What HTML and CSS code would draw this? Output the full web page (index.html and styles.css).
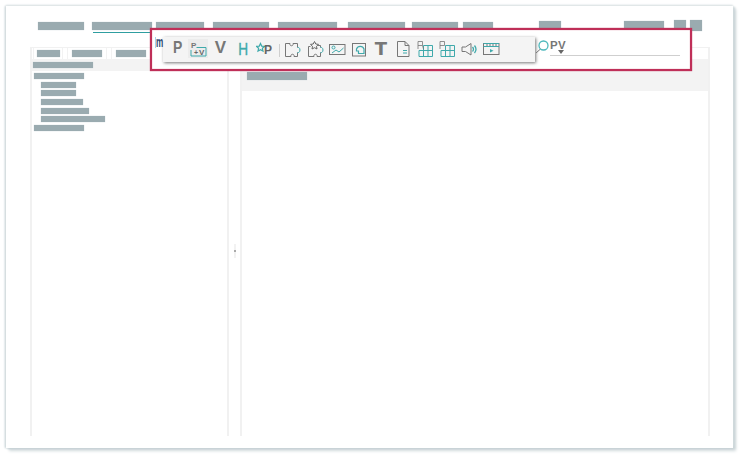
FILE: index.html
```html
<!DOCTYPE html>
<html lang="en">
<head>
<meta charset="utf-8">
<title>Toolbar</title>
<link rel="stylesheet" href="styles.css">
</head>
<body>
<div class="window">
  <nav class="nav">
    <span class="bar n1"></span><span class="bar n2 active"></span><span class="bar n3"></span><span class="bar n4"></span><span class="bar n5"></span><span class="bar n6"></span><span class="bar n7"></span><span class="bar n8"></span><span class="bar n9"></span><span class="bar n10"></span><span class="bar n11"></span><span class="bar n12"></span>
  </nav>
  <main class="main">
    <section class="panel left">
      <div class="tabs">
        <div class="tab t1"><span class="bar"></span></div>
        <div class="tab t2"><span class="bar"></span></div>
        <div class="tab t3"><span class="bar"></span></div>
      </div>
      <div class="tree-head"><span class="bar"></span></div>
      <ul class="tree">
        <li class="root r50"><span class="bar"></span></li>
        <li class="c35"><span class="bar"></span></li>
        <li class="c35"><span class="bar"></span></li>
        <li class="c42"><span class="bar"></span></li>
        <li class="c48"><span class="bar"></span></li>
        <li class="c64"><span class="bar"></span></li>
        <li class="root r50"><span class="bar"></span></li>
      </ul>
    </section>
    <div class="gutter"><span class="handle"></span></div>
    <section class="panel right">
      <div class="right-tabs"></div>
      <div class="right-head"><span class="bar"></span></div>
    </section>
  </main>

  <div class="callout">
    <span class="frag"><span class="frag-m">m</span></span>
    <div class="toolbar">
      <span class="slot letter p">P</span>
      <span class="slot on">
        <svg width="18" height="18" viewBox="0 0 18 18"><path d="M7.500 7.500H17V16H2V10" fill="none" stroke="#3fa9ab"/><text x="2" y="8" class="t-sm">P</text><text x="5" y="15" class="t-plus">+</text><text x="10" y="15" class="t-v">V</text></svg>
      </span>
      <span class="slot letter v">V</span>
      <span class="slot letter h">H</span>
      <span class="slot">
        <svg width="17" height="18" viewBox="0 0 17 18"><path d="M4.500 3.500l1.200 2.600 2.800.3-2.100 1.900.6 2.800-2.500-1.400-2.500 1.400.6-2.800L.5 6.400l2.800-.3z" fill="none" stroke="#3fa9ab" stroke-width="1.200"/><text x="8" y="14" class="t-md">P</text></svg>
      </span>
      <span class="slot"><span class="sep"></span></span>
      <span class="slot">
        <svg width="16" height="18" viewBox="0 0 16 18"><path d="M.5 3.500H5C4 6.500 9 6.500 8 3.500H12.500V7.500M12.500 12.500V16.500H9C10 13.500 5 13.500 6 16.500H.5V3.500" fill="none" stroke="#777"/><path d="M12.500 7.500C15.800 6.500 15.800 13.500 12.500 12.500" fill="none" stroke="#3fa9ab"/></svg>
      </span>
      <span class="slot">
        <svg width="16" height="18" viewBox="0 0 16 18"><path d="M2.500 6.500H.5V16.500H6C5 13.500 10 13.500 9 16.500H12.500V12.500M12.500 7.500V5.500H10" fill="none" stroke="#777"/><path d="M12.500 7.500C15.800 6.500 15.800 13.500 12.500 12.500" fill="none" stroke="#3fa9ab"/><path d="M6.500 1.500l1.300 2.500 2.700.4-2 1.900.5 2.700-2.500-1.300-2.500 1.300.5-2.700-2-1.900 2.700-.4z" fill="none" stroke="#666"/></svg>
      </span>
      <span class="slot">
        <svg width="17" height="18" viewBox="0 0 17 18"><rect x=".5" y="4.500" width="15.500" height="10" fill="none" stroke="#777"/><circle cx="4.500" cy="7.500" r="1.500" fill="none" stroke="#3fa9ab"/><path d="M3 13L7 10L10 12L14.500 8" fill="none" stroke="#3fa9ab"/></svg>
      </span>
      <span class="slot">
        <svg width="15" height="18" viewBox="0 0 15 18"><rect x=".5" y="3.500" width="13" height="12.500" fill="none" stroke="#777"/><path d="M4.500 11V9A4 4 0 0 1 12 9V13.500H6.500V11z" fill="none" stroke="#3fa9ab" stroke-width="1.200"/></svg>
      </span>
      <span class="slot letter t">T</span>
      <span class="slot">
        <svg width="13" height="18" viewBox="0 0 13 18"><path d="M.5 1.500H8L12 5.500V16.500H.5zM8 1.500V5.500H12" fill="none" stroke="#777"/><path d="M6 10.500H10M6 13H10" fill="none" stroke="#3fa9ab"/></svg>
      </span>
      <span class="slot">
        <svg width="16" height="18" viewBox="0 0 16 18"><path d="M6.500 5.500H15.500V16.500H2V10.500H15.500M6.500 5.500V16.500M11 5.500V16.500" fill="none" stroke="#3fa9ab"/><path d="M1 9V1.500H5.500V5.500M1 5.500H5.500L6.500 9" fill="none" stroke="#777" stroke-width=".8"/></svg>
      </span>
      <span class="slot">
        <svg width="16" height="18" viewBox="0 0 16 18"><path d="M6.500 5.500H15.500V16.500H2V10.500H15.500M6.500 5.500V16.500M11 5.500V16.500" fill="none" stroke="#3fa9ab"/><path d="M1 9V1.500H5.500V5.500H1" fill="none" stroke="#777" stroke-width=".8"/></svg>
      </span>
      <span class="slot">
        <svg width="17" height="18" viewBox="0 0 17 18"><path d="M1 7H4.500L10 3.500V15L4.500 11.500H1z" fill="none" stroke="#777"/><path d="M11.500 7C12.800 8.500 12.800 10 11.500 11.500M13.500 5.500C15.500 8 15.500 10.500 13.500 13" fill="none" stroke="#3fa9ab" stroke-width="1.300"/></svg>
      </span>
      <span class="slot">
        <svg width="17" height="18" viewBox="0 0 17 18"><rect x=".5" y="3.500" width="15.500" height="11" fill="none" stroke="#777"/><path d="M.5 6.500H16M.5 3.500H16" stroke="#3fa9ab" fill="none"/><path d="M4 4V6M7 4V6M10 4V6M13 4V6" stroke="#777" fill="none"/><path d="M7 9L10.500 10.700L7 12.500z" fill="#3fa9ab"/></svg>
      </span>
    </div>
    <div class="search">
      <svg class="lens" width="15" height="14" viewBox="0 0 15 14"><circle cx="8.500" cy="5.500" r="4.500" fill="none" stroke="#4cb8bc" stroke-width="1.300"/><path d="M5.500 9L1 13" stroke="#777" fill="none"/></svg>
      <div class="field">
        <span class="pv">PV</span>
        <span class="caret"></span>
      </div>
    </div>
  </div>
</div>
</body>
</html>
```
FILE: styles.css
```css
* { box-sizing: border-box; }
html, body { margin: 0; padding: 0; background: #fff; }
body { width: 742px; height: 458px; overflow: hidden; font-family: "Liberation Sans", Arial, sans-serif; }

.window {
  position: relative;
  width: 727px;
  height: 442px;
  margin: 6px 0 0 6px;
  background: #fff;
  box-shadow: 0 -1px 2px #dfe5e6, -1px 0 2px #bccacd, 2px 1px 2px #c9d4d7, 3px 3px 3px #d3dcde;
  padding-top: 14px;
}

.bar { display: block; height: 7px; background: #9aabb0; box-shadow: 0 0 1px #c4cfd2; }

.nav { display: flex; align-items: center; height: 11px; padding-left: 32px; }
.nav .bar { height: 8px; flex: none; }
.n1 { width: 46px; }
.n2 { width: 60px; margin-left: 8px; position: relative; }
.n2::after { content: ""; position: absolute; left: 1px; right: -1px; top: 10px; height: 1px; background: #2f9ea0; }
.n3 { width: 48px; margin-left: 4px; }
.n4 { width: 56px; margin-left: 9px; }
.n5 { width: 59px; margin-left: 9px; }
.n6 { width: 57px; margin-left: 11px; }
.n7 { width: 46px; margin-left: 7px; }
.n8 { width: 30px; margin-left: 5px; }
.nav .n9 { width: 22px; margin-left: 46px; height: 9px; }
.nav .n10 { width: 40px; margin-left: 63px; height: 10px; }
.nav .n11 { width: 12px; margin-left: 10px; height: 11px; }
.nav .n12 { width: 12px; margin-left: 4px; height: 11px; }

.main { display: flex; height: 389px; margin: 16px 0 0 24px; }
.panel { flex: none; border: solid #f1f1f1; border-width: 1px 2px 0 2px; }
.left { width: 199px; }
.right { width: 470px; }

.gutter { flex: none; width: 11px; display: flex; justify-content: center; padding-top: 197px; }
.handle { display: block; width: 2px; height: 14px; background: linear-gradient(#f2f2f2 40%, #aaa 40%, #aaa 60%, #f2f2f2 60%); }

.tabs { display: flex; height: 11px; padding-left: 1px; }
.tab { height: 11px; border: solid #f2f2f2; border-width: 0 1px; display: flex; justify-content: center; padding-top: 2px; }
.t1 { width: 30px; }
.t2 { width: 40px; margin-left: 4px; }
.t3 { width: 40px; margin-left: 4px; }
.t1 .bar { width: 23px; }
.t2 .bar, .t3 .bar { width: 30px; }

.tree-head { height: 12px; background: #f3f3f3; padding: 3px 0 0 1px; }
.tree-head .bar { width: 60px; height: 6px; }

.tree { list-style: none; margin: 2px 0 0; padding: 0; }
.tree li { height: 8.7px; margin-left: 9px; }
.tree li .bar { height: 6px; }
.tree li.root { margin-left: 2px; }
.r50 .bar { width: 50px; }
.c35 .bar { width: 35px; }
.c42 .bar { width: 42px; }
.c48 .bar { width: 48px; }
.c64 .bar { width: 64px; }

.right-tabs { height: 11px; }
.right-head { height: 32px; background: #f3f3f3; padding: 13px 0 0 5px; }
.right-head .bar { width: 60px; height: 8px; }

.callout {
  position: absolute;
  left: 144px;
  top: 22px;
  width: 542px;
  height: 43px;
  background: #fff;
  border: 2px solid #bf2f58;
  box-shadow: 0 0 1px #bf2f58, inset 0 0 1px #bf2f58;
  display: flex;
  align-items: flex-start;
  padding: 7px 0 0 3px;
}
.frag { width: 8px; height: 11px; flex: none; border-left: 1px solid #a8d4ee; }
.frag-m { display: block; font-size: 14px; line-height: 10px; color: #2c4a72; font-weight: bold; transform: scaleX(.58); transform-origin: left center; }

.toolbar {
  flex: none;
  width: 372px;
  height: 25px;
  padding: 3px 0 0 5px;
  background: #f4f4f4;
  box-shadow: 1px 1px 3px #777;
  display: grid;
  grid-template-columns: 20px 20px 25px 21px 20px 10px 17px 29px 14px 30px 14px 30px 13px 31px 14px 30px;
  grid-template-rows: 18px;
  justify-items: center;
  align-items: center;
}
.slot { display: flex; align-items: center; justify-content: center; height: 18px; }
.slot.on { width: 20px; background: #ececec; box-shadow: 0 -1px #ececec; }
.slot svg { display: block; flex: none; }

.letter { font-weight: bold; line-height: 18px; color: #777; }
.p { font-size: 17px; margin-bottom: 3px; transform: scaleX(.82); }
.v { font-size: 17px; margin-bottom: 2px; }
.h { font-size: 17px; color: #3fa9ab; transform: scaleX(.8); font-weight: normal; -webkit-text-stroke: .4px #3fa9ab; margin-top: 1px; }
.t { font-family: "DejaVu Sans", sans-serif; font-size: 18px; }

.sep { display: block; width: 1px; height: 13px; background: #cfcfcf; margin-top: 2px; }

.t-sm { font: bold 8px "Liberation Sans", sans-serif; fill: #777; }
.t-md { font: bold 12px "Liberation Sans", sans-serif; fill: #666; }
.t-plus { font: bold 7px "Liberation Sans", sans-serif; fill: #666; }
.t-v { font: bold 8px "Liberation Sans", sans-serif; fill: #666; }

.search { flex: none; display: flex; align-items: flex-start; padding-top: 3px; }
.lens { display: block; flex: none; }
.field { width: 130px; height: 16px; border-bottom: 1px solid #cfcfcf; position: relative; }
.pv { display: block; font-size: 11.500px; font-weight: bold; line-height: 10px; color: #777; letter-spacing: .3px; }
.caret { position: absolute; left: 8px; top: 10px; width: 0; height: 0; border: 3px solid transparent; border-top: 4px solid #666; border-bottom: 0; }
```
